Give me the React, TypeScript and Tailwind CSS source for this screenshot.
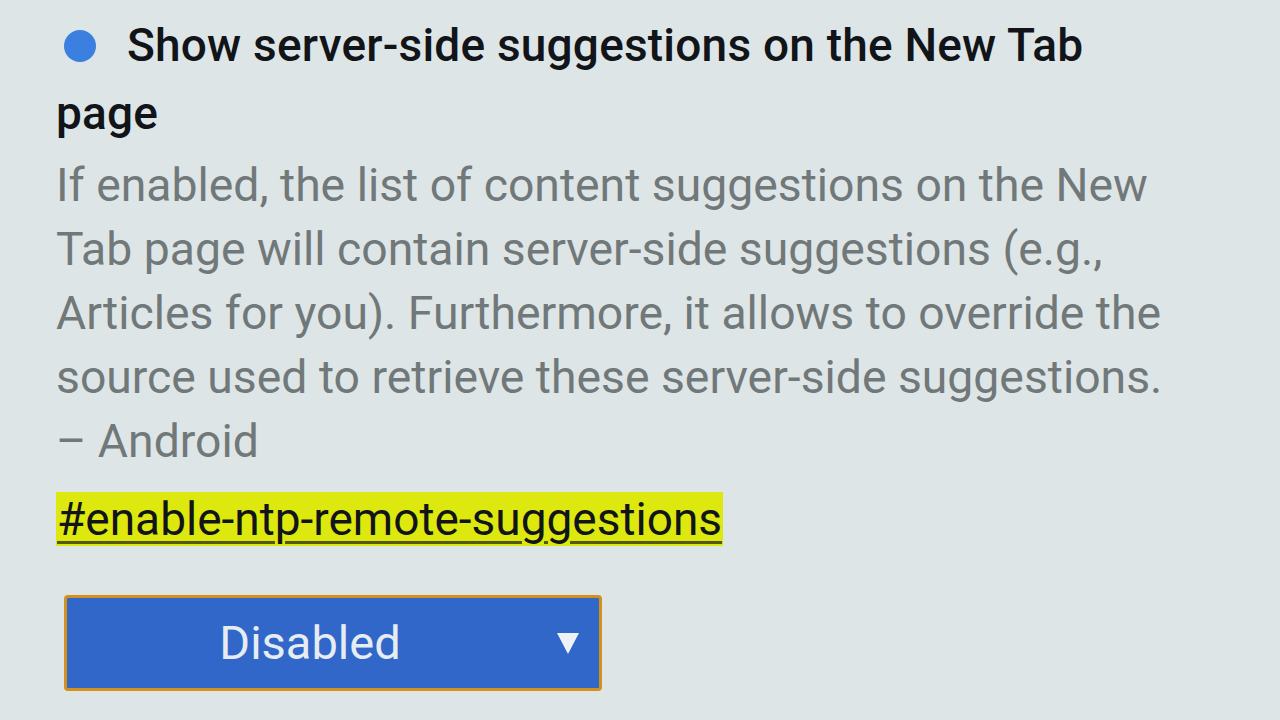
export default function App() {
  return (
    <div className="min-h-screen w-full bg-[#dee5e6] overflow-hidden" style={{ fontFamily: 'Roboto, "Liberation Sans", sans-serif' }}>
      <div className="pl-[56px] pt-[11px] w-[1178px]">
        <h2 className="text-[46px] leading-[68px] font-medium tracking-[0.2px] text-[#111418]">
          <span className="inline-block w-[32px] h-[32px] rounded-full bg-[#3b7fe0] ml-[8px] mr-[31px] align-[-1px]"></span>
          Show server-side suggestions on the New Tab page
        </h2>
        <p className="mt-[6px] text-[46.3px] leading-[64px] text-[#707879]">
          If enabled, the list of content suggestions on the New Tab page will contain server-side suggestions (e.g., Articles for you). Furthermore, it allows to override the source used to retrieve these server-side suggestions.
        </p>
        <p className="text-[46.3px] leading-[64px] text-[#707879]">– Android</p>
        <div className="mt-[19px]">
          <a className="bg-[#dde80e] text-[#111418] text-[46px] leading-[54px] underline decoration-[#55590f] decoration-[3px] underline-offset-[6px] px-[1px]">
            #enable-ntp-remote-suggestions
          </a>
        </div>
        <div className="mt-[49px] ml-[8px] w-[538px] h-[96px] rounded-[4px] border-[3px] border-[#d4901c] bg-[#3067c8] flex items-center relative">
          <span className="flex-1 text-center pr-[46px] text-[47px] text-[#e6ecf2]">Disabled</span>
          <svg className="absolute right-[20px] top-[34px]" width="22" height="22" viewBox="0 0 22 22">
            <polygon points="0,1 22,1 11,22" fill="#eef2f6" />
          </svg>
        </div>
      </div>
    </div>
  )
}
